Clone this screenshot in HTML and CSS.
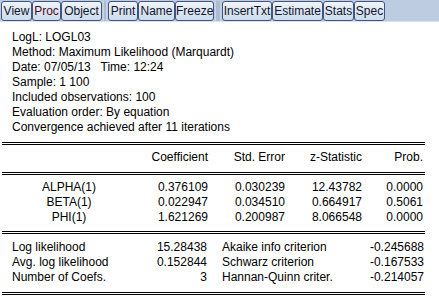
FILE: index.html
```html
<!DOCTYPE html>
<html>
<head>
<meta charset="utf-8">
<link rel="stylesheet" href="styles.css">
</head>
<body>
<div class="toolbar">
  <span class="btn">View</span>
  <span class="btn btn-proc">Proc</span>
  <span class="btn">Object</span>
  <span class="sep"></span>
  <span class="btn">Print</span>
  <span class="btn">Name</span>
  <span class="btn">Freeze</span>
  <span class="sep"></span>
  <span class="btn">InsertTxt</span>
  <span class="btn">Estimate</span>
  <span class="btn">Stats</span>
  <span class="btn">Spec</span>
</div>
<div class="output">
  <div class="info">
    <div>LogL: LOGL03</div>
    <div>Method: Maximum Likelihood (Marquardt)</div>
    <div>Date: 07/05/13&nbsp;&nbsp; Time: 12:24</div>
    <div>Sample: 1 100</div>
    <div>Included observations: 100</div>
    <div>Evaluation order: By equation</div>
    <div>Convergence achieved after 11 iterations</div>
  </div>
  <div class="dline dl1"></div>
  <div class="coef head">
    <span></span><span>Coefficient</span><span>Std. Error</span><span>z-Statistic</span><span>Prob.</span>
  </div>
  <div class="dline dl2"></div>
  <div class="coefs">
    <div class="coef"><span>ALPHA(1)</span><span>0.376109</span><span>0.030239</span><span>12.43782</span><span>0.0000</span></div>
    <div class="coef"><span>BETA(1)</span><span>0.022947</span><span>0.034510</span><span>0.664917</span><span>0.5061</span></div>
    <div class="coef"><span>PHI(1)</span><span>1.621269</span><span>0.200987</span><span>8.066548</span><span>0.0000</span></div>
  </div>
  <div class="dline dl3"></div>
  <div class="stats">
    <div class="stat"><span>Log likelihood</span><span>15.28438</span><span>Akaike info criterion</span><span>-0.245688</span></div>
    <div class="stat"><span>Avg. log likelihood</span><span>0.152844</span><span>Schwarz criterion</span><span>-0.167533</span></div>
    <div class="stat"><span>Number of Coefs.</span><span>3</span><span>Hannan-Quinn criter.</span><span>-0.214057</span></div>
  </div>
  <div class="dline dl4"></div>
</div>
</body>
</html>
```
FILE: styles.css
```css
html, body {
  margin: 0;
  padding: 0;
  background: #ffffff;
}
body {
  width: 439px;
  height: 306px;
  overflow: hidden;
  font-family: "Liberation Sans", Arial, sans-serif;
  font-size: 12px;
  color: #000;
}
.toolbar {
  height: 22px;
  box-sizing: border-box;
  padding: 1px 0 1px 1px;
  display: grid;
  grid-template-columns: 31px 29px 41px 6px 30px 37px 39px 8px 50px 51px 31px 31px;
  background-color: #c6d3e6;
  background-image: radial-gradient(#b4c3da 0.6px, transparent 0.8px);
  background-size: 2px 2px;
  border-bottom: 1px solid #d9e2ef;
}
.btn {
  box-sizing: border-box;
  height: 20px;
  border: 1px solid #3d5580;
  border-radius: 3px;
  background: linear-gradient(#f1f5fb, #dbe4f1 55%, #cfdbec);
  font-size: 12px;
  line-height: 18px;
  text-align: center;
  color: #10182c;
  white-space: nowrap;
  overflow: hidden;
}
.btn-proc {
  color: #4a1020;
}
.sep {
  margin: 0 1px;
  background: #aebbd0;
  border-left: 1px solid #c9d3e2;
  border-right: 1px solid #c9d3e2;
}
.output {
  padding-left: 2px;
  width: 423px;
}
.info {
  padding: 8px 0 0 10px;
  line-height: 15px;
}
.dline {
  height: 1px;
  border-top: 1px solid #000;
  border-bottom: 1px solid #000;
}
.dl1 { margin-top: 7px; }
.dl2 { margin-top: 7px; }
.dl3 { margin-top: 6px; }
.dl4 { margin-top: 7px; }
.coef {
  display: grid;
  grid-template-columns: 134px 72px 77px 77px 61px;
  line-height: 15px;
  white-space: nowrap;
}
.coef span {
  text-align: right;
}
.coef span:first-child {
  text-align: center;
}
.head {
  margin-top: 5px;
}
.coefs {
  margin-top: 5px;
}
.stats {
  margin-top: 6px;
}
.stat {
  display: grid;
  grid-template-columns: 150px 55px 155px 62px;
  line-height: 15px;
  white-space: nowrap;
}
.stat span:nth-child(1) {
  padding-left: 10px;
}
.stat span:nth-child(2),
.stat span:nth-child(4) {
  text-align: right;
}
.stat span:nth-child(3) {
  padding-left: 15px;
}
```
